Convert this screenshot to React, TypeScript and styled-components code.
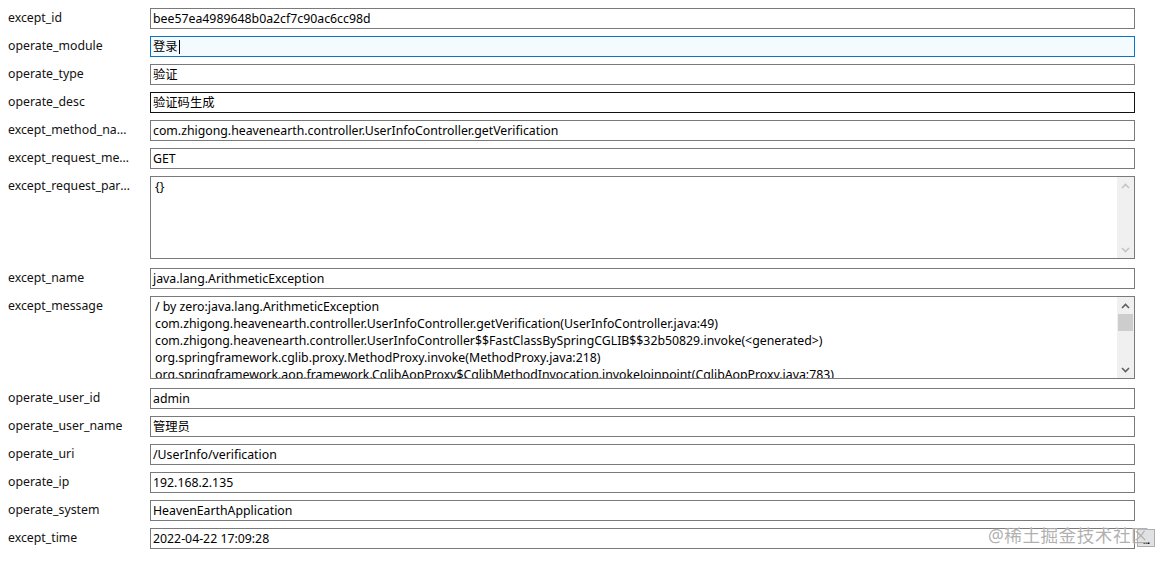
import React from 'react';
import styled, {createGlobalStyle, css} from 'styled-components';

const GlobalStyle = createGlobalStyle`
  html, body {
    margin: 0;
    padding: 0;
    background: #fff;
  }
  body {
    font-family: "Noto Sans", "Noto Sans CJK SC", sans-serif;
    font-size: 12.3px;
    color: #000;
  }
`;

type FieldState = 'normal' | 'focus' | 'hover';

interface Row {
  label: string;
  value?: string;
  lines?: string[];
  state?: FieldState;
  scroll?: 'disabled' | 'active';
  browse?: boolean;
}

const rows: Row[] = [
  {label: 'except_id', value: 'bee57ea4989648b0a2cf7c90ac6cc98d'},
  {label: 'operate_module', value: '登录', state: 'focus'},
  {label: 'operate_type', value: '验证'},
  {label: 'operate_desc', value: '验证码生成', state: 'hover'},
  {label: 'except_method_name', value: 'com.zhigong.heavenearth.controller.UserInfoController.getVerification'},
  {label: 'except_request_method', value: 'GET'},
  {label: 'except_request_params', lines: ['{}'], scroll: 'disabled'},
  {label: 'except_name', value: 'java.lang.ArithmeticException'},
  {
    label: 'except_message',
    scroll: 'active',
    lines: [
      '/ by zero:java.lang.ArithmeticException',
      'com.zhigong.heavenearth.controller.UserInfoController.getVerification(UserInfoController.java:49)',
      'com.zhigong.heavenearth.controller.UserInfoController$$FastClassBySpringCGLIB$$32b50829.invoke(<generated>)',
      'org.springframework.cglib.proxy.MethodProxy.invoke(MethodProxy.java:218)',
      'org.springframework.aop.framework.CglibAopProxy$CglibMethodInvocation.invokeJoinpoint(CglibAopProxy.java:783)',
    ],
  },
  {label: 'operate_user_id', value: 'admin'},
  {label: 'operate_user_name', value: '管理员'},
  {label: 'operate_uri', value: '/UserInfo/verification'},
  {label: 'operate_ip', value: '192.168.2.135'},
  {label: 'operate_system', value: 'HeavenEarthApplication'},
  {label: 'except_time', value: '2022-04-22 17:09:28', browse: true},
];

function Chevron({up, dim}: {up?: boolean; dim?: boolean}) {
  return (
    <svg width="9" height="6" viewBox="0 0 9 6">
      <path
        d={up ? 'M1 5 L4.5 1.5 L8 5' : 'M1 1 L4.5 4.5 L8 1'}
        fill="none"
        stroke={dim ? '#c4c4c4' : '#606060'}
        strokeWidth="1.6"
      />
    </svg>
  );
}

function App() {
  return (
    <>
      <GlobalStyle />
      <Page>
        <Form>
          {rows.map((row) => (
            <React.Fragment key={row.label}>
              <Label>{row.label}</Label>
              {row.lines ? (
                <MemoBox>
                  <MemoText>
                    {row.lines.map((line, i) => (
                      <MemoLine key={i}>{line}</MemoLine>
                    ))}
                  </MemoText>
                  <ScrollBar>
                    <ArrowButton>
                      <Chevron up dim={row.scroll === 'disabled'} />
                    </ArrowButton>
                    <Track>{row.scroll === 'active' && <Thumb />}</Track>
                    <ArrowButton>
                      <Chevron dim={row.scroll === 'disabled'} />
                    </ArrowButton>
                  </ScrollBar>
                </MemoBox>
              ) : (
                <Field $state={row.state || 'normal'}>
                  {row.value}
                  {row.state === 'focus' && <Caret />}
                </Field>
              )}
              {row.browse ? <BrowseButton>...</BrowseButton> : <span />}
            </React.Fragment>
          ))}
        </Form>
        <Watermark>@稀土掘金技术社区</Watermark>
      </Page>
    </>
  );
}

const Page = styled.div`
  position: relative;
  width: 1165px;
  height: 561px;
  padding: 8px 0 0 8px;
  box-sizing: border-box;
  overflow: hidden;
`;

const Form = styled.div`
  display: grid;
  grid-template-columns: 142px 985px 21px;
  row-gap: 7px;
  align-items: start;
`;

const Label = styled.div`
  width: 123px;
  padding-top: 1px;
  line-height: 17px;
  white-space: nowrap;
  overflow: hidden;
  text-overflow: ellipsis;
  color: #111;
`;

const fieldBorders = {
  normal: css`
    border-color: #7a7a7a;
    background: #fff;
  `,
  focus: css`
    border-color: #0a74c6;
    background: #f3fbfe;
  `,
  hover: css`
    border-color: #111;
    background: #fff;
  `,
};

const Field = styled.div<{$state: FieldState}>`
  height: 21px;
  box-sizing: border-box;
  border: 1px solid;
  ${(p) => fieldBorders[p.$state]}
  padding: 0 2px;
  line-height: 19px;
  white-space: nowrap;
  overflow: hidden;
  display: flex;
  align-items: center;
`;

const Caret = styled.span`
  display: inline-block;
  width: 1px;
  height: 14px;
  background: #000;
  margin-left: 1px;
`;

const MemoBox = styled.div`
  height: 83px;
  margin-bottom: 2px;
  box-sizing: border-box;
  border: 1px solid #7a7a7a;
  display: flex;
  background: #fff;
`;

const MemoText = styled.div`
  flex: 1;
  padding: 1px 4px;
  overflow: hidden;
`;

const MemoLine = styled.div`
  line-height: 17px;
  white-space: nowrap;
`;

const ScrollBar = styled.div`
  width: 17px;
  display: flex;
  flex-direction: column;
  background: #f0f0f0;
`;

const ArrowButton = styled.div`
  height: 17px;
  display: flex;
  align-items: center;
  justify-content: center;
`;

const Track = styled.div`
  flex: 1;
  padding: 0 1px;
`;

const Thumb = styled.div`
  height: 17px;
  background: #cdcdcd;
`;

const BrowseButton = styled.div`
  margin: 1px 0 0 2px;
  width: 18px;
  height: 18px;
  box-sizing: border-box;
  border: 1px solid #adadad;
  background: #e1e1e1;
  font-size: 11px;
  font-weight: bold;
  line-height: 20px;
  text-align: center;
  letter-spacing: -1px;
`;

const Watermark = styled.div`
  position: absolute;
  left: 988px;
  top: 522px;
  font-size: 17.6px;
  letter-spacing: 0.5px;
  color: rgba(150, 150, 150, 0.75);
  text-shadow: 0 0 1px rgba(255, 255, 255, 0.9);
  pointer-events: none;
`;

export default App;
